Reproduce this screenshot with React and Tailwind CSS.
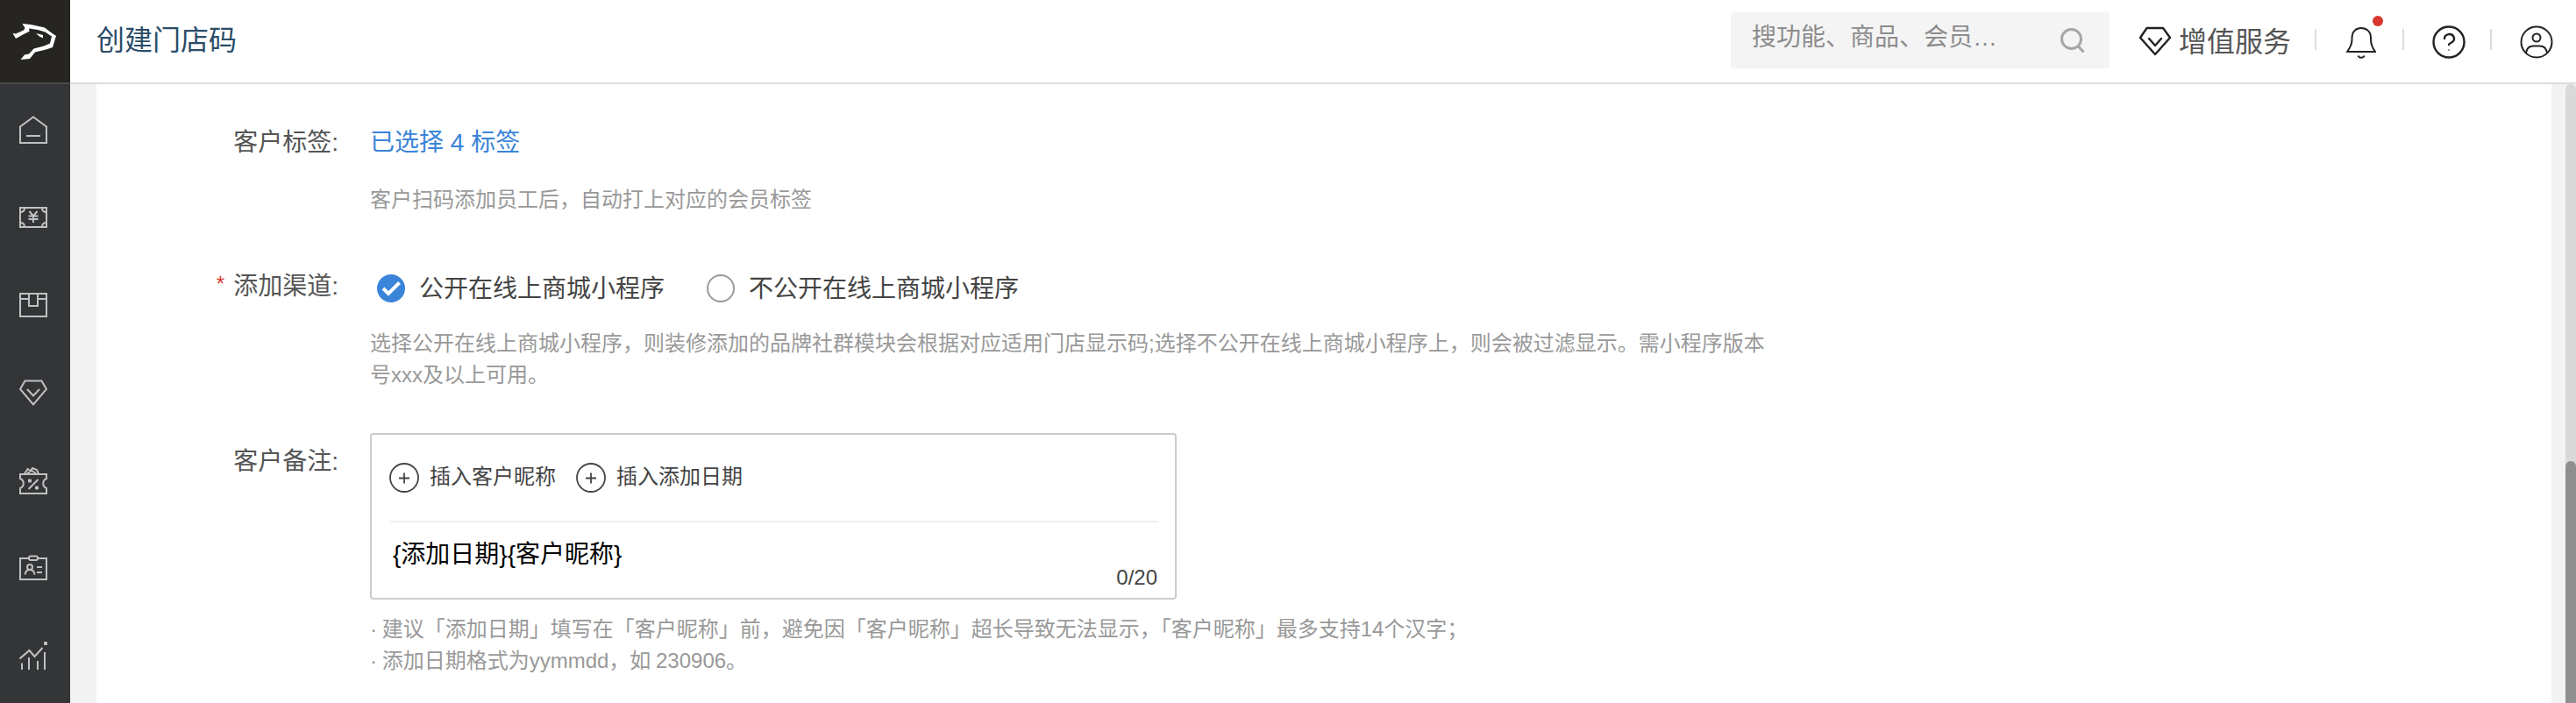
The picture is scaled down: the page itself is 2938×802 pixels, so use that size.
function Svg({ className, children, ...rest }) {
  return (
    <svg className={className} fill="none" stroke="currentColor" strokeWidth="2" {...rest}>
      {children}
    </svg>
  );
}

const NAV_ICONS = [
  {
    key: "home",
    shape: (
      <>
        <path d="M1 12.5 16 1.5l15 11V31H1z" />
        <path d="M8 23h16" />
      </>
    ),
  },
  {
    key: "money",
    shape: (
      <>
        <path d="M1 5h30v22H1z" />
        <path d="M1 10c3 0 5-2 5-5M31 10c-3 0-5-2-5-5M1 22c3 0 5 2 5 5M31 22c-3 0-5 2-5 5" />
        <path d="m11.5 9 4.500 5.500L20.500 9M16 14.500V22M10.500 14.500h11M10.500 18h11" />
      </>
    ),
  },
  {
    key: "goods",
    shape: (
      <>
        <path d="M1 3h30v26H1zM1 9h10M21 9h10" />
        <path d="M11 3v14h10V3" />
      </>
    ),
  },
  {
    key: "member",
    shape: (
      <>
        <path d="M6.500 2.500h19L31 12 16 29.500 1 12z" />
        <path d="m9 12 7 7.500 7-7.500" />
      </>
    ),
  },
  {
    key: "coupon",
    shape: (
      <>
        <path d="M1 9h30v5c-5 2-5 9 0 11v6H1v-6c5-2 5-9 0-11z" />
        <path d="m10.500 26 11-11" />
        <path d="M6 8.500 9.500 3 13 5l2-3 5 2 2 4.500M9 8l5-3 5 3" />
        <path d="M10.500 15h3v3h-3zM18.500 23h3v3h-3z" fill="currentColor" strokeWidth="1" />
      </>
    ),
  },
  {
    key: "staff",
    shape: (
      <>
        <path d="M11 5H1v24h30V5H21" />
        <rect x="11" y="2.500" width="10" height="4.500" rx="2" />
        <circle cx="12" cy="15" r="3" />
        <path d="M6.500 23.500c.5-3.500 2.500-5.500 5.500-5.500s5 2 5.500 5.500M20 15h6M20 21h6" />
      </>
    ),
  },
  {
    key: "data",
    shape: (
      <>
        <path d="m.5 19.500 11-9.500 6 7L26.500 7M3 24.500V32M11 18v14M21 22v10M29 12v20" />
        <path d="M28.500 .5h3v3h-3z" fill="currentColor" strokeWidth="1" />
      </>
    ),
  },
];

function Sidebar() {
  return (
    <aside className="flex w-20 shrink-0 flex-col bg-[#343537]">
      <div className="h-24 shrink-0 border-b-2 border-[#4a4b4d] bg-[#262522]">
        <svg className="h-[94px] w-20" viewBox="0 0 80 94" fill="#fff">
          <path d="M14.500 38 18 38.500 27 34.500 28.500 32 25.500 27 35 28 51 31.500 56 35.500 64 41 60 54 52.500 56.500 40 59.500 34 67 23.500 68 28 62.500 33 61.500 38.500 55.500 50 52.500 57 49.500 59 41.500 51.500 36.500 43 34 33 32.500 33.500 36 28 38.500 18 44z" />
          <path d="m41 38 8 2v3.500l-4-2z" />
        </svg>
      </div>
      <nav className="flex flex-col items-center gap-[68px] pt-9 pr-1 text-[#c0c1c2]">
        {NAV_ICONS.map(({ key, shape }) => (
          <Svg key={key} className="size-8" viewBox="0 0 32 32">
            {shape}
          </Svg>
        ))}
      </nav>
    </aside>
  );
}

function Divider() {
  return <span className="-mt-1 h-6 w-0.5 bg-[#dcdcdc]" />;
}

function Header() {
  return (
    <header className="flex h-24 shrink-0 items-center border-b-2 border-[#ddd] bg-white pr-[26px] pl-[30px]">
      <h1 className="-mt-0.5 text-[32px] leading-10 text-[#2b4c68]">创建门店码</h1>
      <div className="-mt-0.5 ml-auto flex h-16 w-[432px] items-center justify-between rounded bg-[#f4f4f4] pr-7 pl-6 text-[28px]">
        <span className="-mt-1.5 leading-10 text-[#8c8c8c]">搜功能、商品、会员…</span>
        <Svg className="size-7 text-[#a6a6a6]" viewBox="0 0 28 28" strokeWidth="3">
          <circle cx="12.500" cy="12.500" r="11" />
          <path d="m20 20.500 6.500 7" />
        </Svg>
      </div>
      <div className="ml-[33px] flex items-center text-[#222]">
        <Svg className="h-[34px] w-[38px]" viewBox="0 0 38 34" strokeWidth="2.4" strokeLinejoin="round" strokeLinecap="round">
          <path d="M9.500 2H28l8 11-17 19L2 13z" />
          <path d="m12 14 7 8 7-8" />
        </Svg>
        <span className="mt-0.5 ml-2 text-[32px] leading-10 text-[#555]">增值服务</span>
      </div>
      <div className="ml-[27px] flex items-center text-[#222]">
        <Divider />
        <div className="relative mt-1 mr-[30px] ml-[34px]">
          <Svg className="h-[38px] w-[34px]" viewBox="0 0 34 38">
            <path d="M1 29h32c-3-4-5-8-5-14v-2C28 6 23 2 17 2S6.500 6 6.500 13v2c0 6-2.500 10-5.500 14z" />
            <path d="M13.500 33.500c1 3 6 3 7 0" />
          </Svg>
          <span className="absolute -top-3 -right-2 size-3 rounded-full bg-[#d93830]" />
        </div>
        <Divider />
        <Svg className="mt-px mr-7 ml-8 size-[38px]" viewBox="0 0 38 38" strokeWidth="2.4" strokeLinecap="round">
          <circle cx="19" cy="19" r="17.500" />
          <path d="M14 15a5.500 5 0 1 1 8 4.500c-2 1-3 1.500-3 2.500" />
          <circle cx="19" cy="28" r=".8" fill="currentColor" stroke="none" />
        </Svg>
        <Divider />
        <Svg className="mt-0.5 ml-8 size-[38px]" viewBox="0 0 38 38">
          <circle cx="19" cy="19" r="17.500" />
          <circle cx="19" cy="14" r="4.500" />
          <path d="M7 31c1-5 4-7.500 8-7.500h8c4 0 7 2.500 8 7.500" />
        </Svg>
      </div>
    </header>
  );
}

function Field({ label, required, className, children }) {
  return (
    <div className={`flex ${className}`}>
      <div className="mr-9 w-[276px] shrink-0 text-right text-[28px] leading-10 text-[#555]">
        {required && <span className="mr-2.5 align-[4px] text-2xl leading-none text-[#d93830]">*</span>}
        {label}:
      </div>
      <div>{children}</div>
    </div>
  );
}

function Radio({ checked, children }) {
  return (
    <label className="flex items-center gap-4 text-[28px] text-[#444]">
      {checked ? (
        <Svg className="size-8" viewBox="0 0 32 32">
          <circle cx="16" cy="16" r="16" fill="#3a84d9" stroke="none" />
          <path d="m7 16 6 6L25.500 9.500" stroke="#fff" strokeWidth="4" />
        </Svg>
      ) : (
        <span className="size-8 rounded-full border-2 border-[#999]" />
      )}
      <span className="pt-0.5 leading-[38px]">{children}</span>
    </label>
  );
}

function InsertButton({ children }) {
  return (
    <button className="flex items-center gap-3">
      <Svg className="size-[34px]" viewBox="0 0 34 34" strokeWidth="1.8">
        <circle cx="17" cy="17" r="16" />
        <path d="M11 17.500h12M17 11.500v12" />
      </Svg>
      <span className="-mt-0.5 leading-8">{children}</span>
    </button>
  );
}

function StoreCodeForm() {
  return (
    <section className="w-[2800px] bg-white">
      <Field label="客户标签" className="pt-[47px]">
        <a className="block text-[28px] leading-10 text-[#3a84d9]">已选择 4 标签</a>
        <p className="mt-[27px] text-2xl leading-9 text-[#999]">客户扫码添加员工后，自动打上对应的会员标签</p>
      </Field>
      <Field label="添加渠道" required className="pt-[61px]">
        <div className="mt-0.5 flex gap-12 pl-2">
          <Radio checked>公开在线上商城小程序</Radio>
          <Radio>不公开在线上商城小程序</Radio>
        </div>
        <p className="mt-[25px] w-[1600px] text-2xl leading-9 text-[#999]">
          选择公开在线上商城小程序，则装修添加的品牌社群模块会根据对应适用门店显示码;选择不公开在线上商城小程序上，则会被过滤显示。需小程序版本号xxx及以上可用。
        </p>
      </Field>
      <Field label="客户备注" className="pt-[61px]">
        <div className="-mt-[13px] h-[190px] w-[920px] rounded border-2 border-[#ccc] px-5">
          <div className="flex h-[100px] items-start gap-[23px] border-b-2 border-[#eee] pt-8 text-2xl text-[#444]">
            <InsertButton>插入客户昵称</InsertButton>
            <InsertButton>插入添加日期</InsertButton>
          </div>
          <div className="mt-[17px] pl-1 text-[28px] leading-10 text-black">{"{添加日期}{客户昵称}"}</div>
          <div className="-mt-2 text-right text-2xl leading-7 text-[#444]">0/20</div>
        </div>
        <div className="mt-4 text-2xl leading-9 text-[#999] [word-spacing:-1px]">
          <p>· 建议「添加日期」填写在「客户昵称」前，避免因「客户昵称」超长导致无法显示，「客户昵称」最多支持14个汉字；</p>
          <p>· 添加日期格式为yymmdd，如 230906。</p>
        </div>
      </Field>
    </section>
  );
}

export default function App() {
  return (
    <div className="flex h-[802px] w-[2938px] overflow-hidden bg-[#f2f2f2] font-['Liberation_Sans','Noto_Sans_CJK_SC',sans-serif]">
      <Sidebar />
      <div className="flex flex-1 flex-col">
        <Header />
        <main className="flex flex-1 justify-between pl-[30px]">
          <StoreCodeForm />
          {/* Scrollbar */}
          <div className="w-3 rounded-t-full bg-[#d9d9d9] pt-[430px]">
            <div className="h-[276px] rounded-t-full bg-[#8f8f8f]" />
          </div>
        </main>
      </div>
    </div>
  );
}
